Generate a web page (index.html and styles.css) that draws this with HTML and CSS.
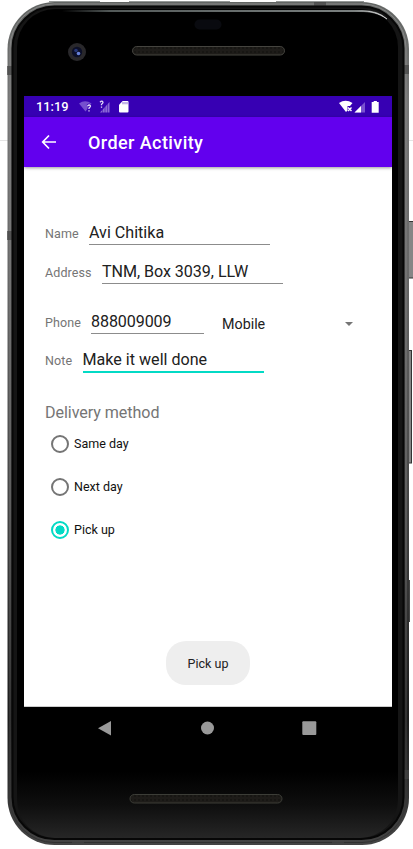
FILE: index.html
```html
<!DOCTYPE html>
<html lang="en">
<head>
<meta charset="utf-8">
<title>Order Activity</title>
<link rel="stylesheet" href="styles.css">
</head>
<body>
<div class="device">
  <svg class="frame" viewBox="0 0 413 849" width="413" height="849" aria-hidden="true">
    <defs>
      <linearGradient id="metal" x1="0" y1="0" x2="0" y2="1">
        <stop offset="0" stop-color="#626563"/><stop offset=".12" stop-color="#777"/><stop offset=".32" stop-color="#686868"/><stop offset=".6" stop-color="#444"/><stop offset=".85" stop-color="#1c1c1c"/><stop offset="1" stop-color="#444"/>
      </linearGradient>
      <linearGradient id="side" x1="0" y1="0" x2="0" y2="1">
        <stop offset="0" stop-color="#888"/><stop offset=".6" stop-color="#777"/><stop offset="1" stop-color="#303030"/>
      </linearGradient>
      <linearGradient id="chin" x1="0" y1="0" x2="0" y2="1">
        <stop offset="0" stop-color="#000"/><stop offset=".92" stop-color="#000"/><stop offset=".96" stop-color="#0e0e0e"/><stop offset="1" stop-color="#262626"/>
      </linearGradient>
      <linearGradient id="shine" x1="0" y1="0" x2="1" y2="0">
        <stop offset="0" stop-color="#000"/><stop offset=".15" stop-color="#68706f"/><stop offset=".9" stop-color="#9aa1a0"/><stop offset="1" stop-color="#eee"/>
      </linearGradient>
      <pattern id="mesh" width="4" height="4" patternUnits="userSpaceOnUse">
        <rect width="4" height="4" fill="#171613"/><path d="M1 0v4M3 1v2" stroke="#282622" stroke-width=".8"/>
      </pattern>
    </defs>
    <path d="M0 140.500h8M408 140.500h5" stroke="#e4e4e4"/>
    <g fill="#858585" stroke="#333" stroke-width="1">
      <rect x="407.500" y="221.500" width="6" height="56.500"/>
      <rect x="407.500" y="350.500" width="4" height="112.500"/>
    </g>
    <rect x="408" y="580" width="2" height="42" fill="#444"/>
    <rect x="7.500" y="2" width="401.500" height="843" rx="47" fill="url(#metal)"/>
    <path d="M49 1.500h51M129 1.500h101M276 1.500h88" stroke="#949796"/>
    <rect x="10" y="4" width="396" height="838.500" rx="44" fill="none" stroke="url(#side)" stroke-width="1"/>
    <path d="M7 66h7v9H7zM7 231h7v9H7zM403 65h6v9h-6zM403 770h6v9h-6zM314 2h12v5h-12zM72 839h12v5H72zM332 839h12v5h-12z" fill="#444" opacity=".7"/>
    <rect x="12.500" y="6.500" width="391" height="832.500" rx="42" fill="#151515" stroke="#070707" stroke-width="2"/>
    <rect x="17" y="9" width="381" height="829" rx="38" fill="url(#chin)"/>
    <path d="M62 10.500H362Q378 10.500 387 19C378 13 371 11.500 360 11.500H62z" fill="url(#shine)" stroke="url(#shine)" stroke-width=".6"/>
    <rect x="194.500" y="19.500" width="27" height="10" rx="5" fill="#090a0f"/>
    <circle cx="77" cy="52" r="9" fill="#29282b"/><circle cx="77" cy="52" r="5.200" fill="#0c0f27"/><circle cx="76" cy="50.500" r="1.800" fill="#263675"/><circle cx="78.500" cy="53.500" r="1.800" fill="#6882db"/>
    <rect x="132.500" y="46.500" width="152" height="8.500" rx="4.250" fill="url(#mesh)" stroke="#45443f"/>
    <rect x="130" y="794.500" width="152" height="8.500" rx="4.250" fill="url(#mesh)" stroke="#3c3d37"/>
  </svg>
  <main class="screen">
    <header class="status">
      <span class="clock">11:19</span>
      <svg class="status-left" width="52" height="14" viewBox="0 0 52 14" aria-hidden="true">
        <path d="M0 3.500Q6-1 12.500 3.500L6.500 11.500z" fill="#7650ce"/>
        <path d="M21 12.500L30.500 2v10.500z" fill="#8b6ad5"/><path d="M23.500 6v7M26 4v9M28.500 2v11" stroke="#3b00b2" stroke-width=".5"/>
        <g fill="none" stroke="#3700b3" stroke-width="2.800"><path d="M8.500 6q2-2 3 0q0 1-1.500 2v1M21 2.500q2-2 3 0q0 1-1.500 2v1"/></g>
        <g fill="none" stroke="#e3dbf7" stroke-width="1.300"><path d="M8.500 6q2-2 3 0q0 1-1.500 2v1M10 10.200v1.300M21 2.200q2-2 3 0q0 1-1.500 2v1M22.500 6.500v1.300"/></g>
        <path d="M43.700 1H48.500q1 0 1 1v9.500q0 1-1 1h-7.500q-1 0-1-1V4.700z" fill="#fff"/><path d="M44 2v2.300M46 2v2.300M48 2v2.300" stroke="#6a45c5" stroke-width=".8"/>
      </svg>
      <svg class="status-right" width="42" height="14" viewBox="0 0 42 14" aria-hidden="true">
        <path d="M1 3Q7.500-1.500 14.500 3L12 6H9.500v4.500L8 12z" fill="#fff"/><path d="m10 7.500 3.500 3.500m0-3.500L10 11" stroke="#fff" stroke-width="1.400"/>
        <path d="M16.500 12.500 27 2v10.500z" fill="#7951d0"/><path d="M16.500 12.500l6.500-6.500v6.500z" fill="#fff"/>
        <path d="M35.700 1h3.200v1h1.800v10.800h-7V2h2z" fill="#fff"/>
      </svg>
    </header>
    <div class="appbar">
      <svg class="back" width="16" height="16" viewBox="0 0 16 16" fill="none" stroke="#fff" stroke-width="1.700" aria-hidden="true"><path d="M15 8H2M8 1.500 1.700 8 8 14.500"/></svg>
      <h1>Order Activity</h1>
    </div>
    <form class="form">
      <div class="row name"><span class="label">Name</span><span class="field">Avi Chitika</span></div>
      <div class="row address"><span class="label">Address</span><span class="field">TNM, Box 3039, LLW</span></div>
      <div class="row phone"><span class="label">Phone</span><span class="field">888009009</span>
        <span class="spinner"><span>Mobile</span><i class="caret"></i></span></div>
      <div class="row note"><span class="label">Note</span><span class="field active">Make it well done</span></div>
      <h2>Delivery method</h2>
      <div class="option"><i class="radio"></i><span>Same day</span></div>
      <div class="option"><i class="radio"></i><span>Next day</span></div>
      <div class="option"><i class="radio checked"></i><span>Pick up</span></div>
    </form>
    <div class="toast">Pick up</div>
  </main>
  <nav class="nav">
    <svg width="368" height="42" viewBox="0 0 368 42" fill="#999" aria-hidden="true"><path d="M74 21.300 87 14v14.500z"/><circle cx="183.500" cy="21" r="6.500"/><rect x="278.300" y="14.300" width="14" height="13.700" rx="1"/></svg>
  </nav>
</div>
</body>
</html>
```
FILE: styles.css
```css
* { box-sizing: border-box; }
body { margin: 0; background: #fff; font-family: Roboto, "Liberation Sans", sans-serif; }
.device { position: relative; width: 413px; height: 849px; padding: 96px 21px 0 24px; overflow: hidden; }
.frame { position: absolute; left: 0; top: 0; }
.screen { position: relative; display: flex; flex-direction: column; height: 611px; background: #fff; border-bottom: 1px solid #ccc; }
.status { display: flex; align-items: center; height: 21px; padding: 0 12px 0 12px; background: #3700b3; color: #fff; }
.clock { width: 43px; font-size: 12.8px; font-weight: 500; line-height: 21px; }
.status-right { margin-left: auto; }
.appbar { display: flex; align-items: center; height: 50px; padding-left: 17px; background: #6200ee; color: #fff; box-shadow: 0 1px 3px rgba(0, 0, 0, 0.4); }
h1 { margin: 1px 0 0 31px; font-size: 18px; font-weight: 500; line-height: 24px; letter-spacing: 0.42px; }
.form { padding: 53px 21px 0; }
.row { display: flex; align-items: baseline; height: 25px; }
.label { color: #757575; font-size: 12.53px; letter-spacing: 0.1px; }
.field { height: 25px; border-bottom: 1px solid #8c8c8c; color: #212121; font-size: 16.1px; line-height: 26px; width: 181px; white-space: nowrap; }
.name .label { width: 44px; }
.address { margin-top: 14px; }
.address .label { width: 57px; }
.address .field { letter-spacing: -0.05px; }
.phone { margin-top: 25px; }
.phone .label { width: 46px; }
.phone .field { width: 113px; letter-spacing: -0.1px; }
.note { margin-top: 13px; }
.note .label { width: 37.5px; }
.field.active { height: 26px; border-bottom: 2px solid #03dac5; }
.spinner { display: flex; align-items: center; justify-content: space-between; width: 131px; margin-left: 18px; color: #212121; font-size: 14.3px; transform: translateY(2px); }
.caret { border: 4px solid transparent; border-top: 4px solid #757575; border-bottom: 0; }
h2 { margin: 30px 0 0; color: #757575; font-size: 16.1px; font-weight: 400; line-height: 22px; letter-spacing: -0.06px; }
.option { display: flex; align-items: center; height: 43px; padding-left: 5.5px; gap: 5.5px; color: #111; font-size: 12.53px; }
h2 + .option { margin-top: -2px; }
.radio { width: 18px; height: 18px; border: 2px solid #757575; border-radius: 50%; }
.radio.checked { border-color: #03dac5; background: radial-gradient(circle, #03dac5 4.3px, transparent 4.9px); }
.toast { display: flex; align-items: center; justify-content: center; align-self: center; width: 84px; height: 44px; margin: auto 0 21px; border-radius: 20px; background: #eee; color: #222; font-size: 12.53px; }
.nav { position: relative; height: 42px; }
```
